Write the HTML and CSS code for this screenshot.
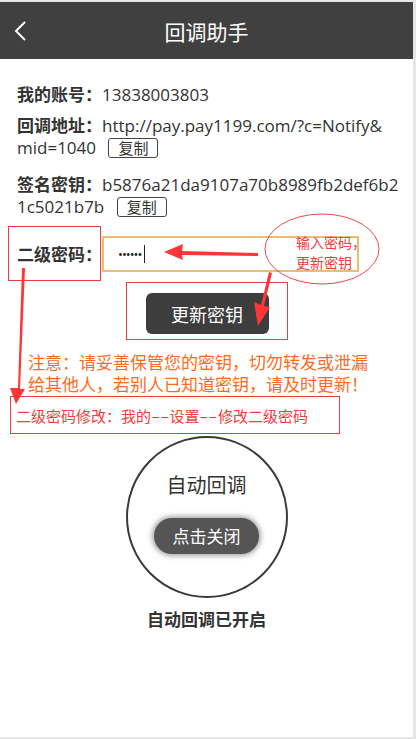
FILE: index.html
```html
<!DOCTYPE html>
<html lang="zh-CN">
<head>
<meta charset="UTF-8">
<meta name="viewport" content="width=device-width, initial-scale=1.0">
<title>回调助手</title>
<link rel="stylesheet" href="styles.css">
</head>
<body>

<div class="page">

  <div class="top-bar">
    <svg class="back-icon" width="14" height="20" viewBox="0 0 14 20">
      <path d="M11 1 L2 10 L11 19" fill="none" stroke="#fff" stroke-width="2"/>
    </svg>
    <h1 class="top-title">回调助手</h1>
  </div>

  <div class="content">
    <p class="info-row account-row"><b>我的账号：</b>13838003803</p>
    <p class="info-row url-row"><b>回调地址：</b>http://pay.pay1199.com/?c=Notify&amp;<br>mid=1040 <span class="copy-btn">复制</span></p>
    <p class="info-row key-row"><b>签名密钥：</b>b5876a21da9107a70b8989fb2def6b21c5021b7b <span class="copy-btn">复制</span></p>

    <div class="pwd-row">
      <div class="pwd-label">二级密码：</div>
      <div class="pwd-input">••••••<span class="caret"></span></div>
    </div>

    <div class="update-wrap">
      <div class="update-box">
        <button class="update-btn">更新密钥</button>
      </div>
    </div>

    <p class="notice">注意：请妥善保管您的密钥，切勿转发或泄漏给其他人，若别人已知道密钥，请及时更新！</p>

    <div class="tip-box">二级密码修改：我的<span class="dash">--</span>设置<span class="dash">--</span>修改二级密码</div>

    <div class="auto-wrap">
      <div class="auto-circle">
        <div class="auto-title">自动回调</div>
        <div class="close-btn">点击关闭</div>
      </div>
      <div class="auto-status">自动回调已开启</div>
    </div>
  </div>

  <!-- annotations drawn over the page -->
  <svg class="marks" width="416" height="739" viewBox="0 0 416 739">
    <ellipse cx="322" cy="249" rx="57" ry="35" fill="none" stroke="#f04848" stroke-width="1"/>
    <text x="296" y="248" class="mark-text">输入密码，</text>
    <text x="296" y="268" class="mark-text">更新密钥</text>
    <polygon points="258,253 182,251 183,244 164,252 183,260 182,255 258,256" fill="#ff3636"/>
    <polygon points="269,272 261,305 254,302 258,326 270,307 264,306 272,273" fill="#ff3636"/>
    <polygon points="22,268 18,388 10,388 16,404 25,389 20,389 25,268" fill="#ff3636"/>
  </svg>

</div>

</body>
</html>
```

FILE: styles.css
```css
/* --- Basic Setup --- */
body {
  margin: 0;
  background-color: #e6e6e6;
  font-family: "Open Sans", "Noto Sans CJK SC", sans-serif;
  color: #333;
}

.page {
  position: relative;
  width: 413px;
  height: 735px;
  margin-top: 2px;
  background-color: #fff;
  overflow: hidden;
}

/* --- Header --- */
.top-bar {
  display: flex;
  align-items: center;
  justify-content: center;
  position: relative;
  height: 57px;
  background-color: #404040;
}

.back-icon {
  position: absolute;
  left: 14px;
  top: 19px;
}

.top-title {
  margin: 0;
  color: #fff;
  font-size: 21px;
  font-weight: normal;
  font-family: "Noto Sans CJK SC", sans-serif;
}

/* --- Account info --- */
.content {
  padding: 25px 6px 0 17px;
}

.info-row {
  margin: 0;
  font-size: 17px;
  line-height: 22px;
}

.info-row b {
  font-weight: bold;
}

.account-row {
  margin-bottom: 9px;
}

.url-row {
  margin-bottom: 15px;
}

.key-row {
  word-break: break-all;
}

.copy-btn {
  display: inline-block;
  box-sizing: border-box;
  margin-left: 8px;
  padding: 0 9px;
  height: 20px;
  line-height: 18px;
  border: 1px solid #444;
  border-radius: 3px;
  font-size: 15px;
  vertical-align: top;
  margin-top: 1px;
}

/* --- Second password --- */
.pwd-row {
  display: flex;
  align-items: center;
  margin: 8px 0 0 -9px;
}

.pwd-label {
  display: flex;
  align-items: center;
  flex-shrink: 0;
  width: 83px;
  height: 53px;
  padding-left: 8px;
  border: 1px solid #f03c3c;
  font-family: "Noto Sans CJK SC", sans-serif;
  font-size: 17px;
  font-weight: bold;
  white-space: nowrap;
}

.pwd-input {
  display: flex;
  align-items: center;
  width: 239px;
  height: 32px;
  margin-left: 1px;
  padding-left: 14px;
  border: 2px solid #ebbd70;
  font-size: 13px;
  letter-spacing: -1px;
  color: #222;
}

.caret {
  display: inline-block;
  width: 1px;
  height: 18px;
  margin-left: 3px;
  background-color: #222;
}

.update-wrap {
  display: flex;
  justify-content: center;
  margin: 1px 0 0 -11px;
}

.update-box {
  display: flex;
  padding: 10px 18px 5px 19px;
  border: 1px solid #f03c3c;
}

.update-btn {
  width: 123px;
  height: 41px;
  border: none;
  border-radius: 6px;
  background-color: #3d3d3d;
  color: #fff;
  font-size: 18px;
  font-family: "Noto Sans CJK SC", sans-serif;
}

.notice {
  width: 350px;
  margin: 11px 0 0 11px;
  color: #ff6a1a;
  font-family: "Noto Sans CJK SC", sans-serif;
  font-size: 17px;
  line-height: 22px;
}

.tip-box {
  display: flex;
  align-items: center;
  width: 323px;
  height: 36px;
  margin: 1px 0 0 -7px;
  padding-left: 5px;
  border: 1px solid #f03c3c;
  color: #f03c3c;
  font-family: "Noto Sans CJK SC", sans-serif;
  font-size: 15px;
  white-space: nowrap;
}

.tip-box .dash {
  display: inline-block;
  margin: 0 4px;
  transform: scaleX(1.75);
}

/* --- Auto callback --- */
.auto-wrap {
  display: flex;
  flex-direction: column;
  align-items: center;
  margin-left: -11px;
}

.auto-circle {
  display: flex;
  flex-direction: column;
  align-items: center;
  width: 158px;
  height: 158px;
  margin-top: 2px;
  border: 2px solid #3a3a3a;
  border-radius: 50%;
}

.auto-title {
  margin-top: 33px;
  font-family: "Noto Sans CJK SC", sans-serif;
  font-size: 20px;
  line-height: 28px;
}

.close-btn {
  width: 105px;
  height: 36px;
  margin-top: 19px;
  line-height: 36px;
  text-align: center;
  border-radius: 18px;
  background-color: #555;
  box-shadow: 0 0 5px 2px rgba(0, 0, 0, 0.35);
  color: #fff;
  font-family: "Noto Sans CJK SC", sans-serif;
  font-size: 17px;
}

.auto-status {
  margin-top: 9px;
  font-family: "Noto Sans CJK SC", sans-serif;
  font-size: 17px;
  line-height: 24px;
  font-weight: bold;
}

/* --- Annotation overlay --- */
.marks {
  position: absolute;
  top: -2px;
  left: 0;
  pointer-events: none;
}

.mark-text {
  font-family: "Noto Sans CJK SC", sans-serif;
  font-size: 14px;
  fill: #f03c3c;
}
```
